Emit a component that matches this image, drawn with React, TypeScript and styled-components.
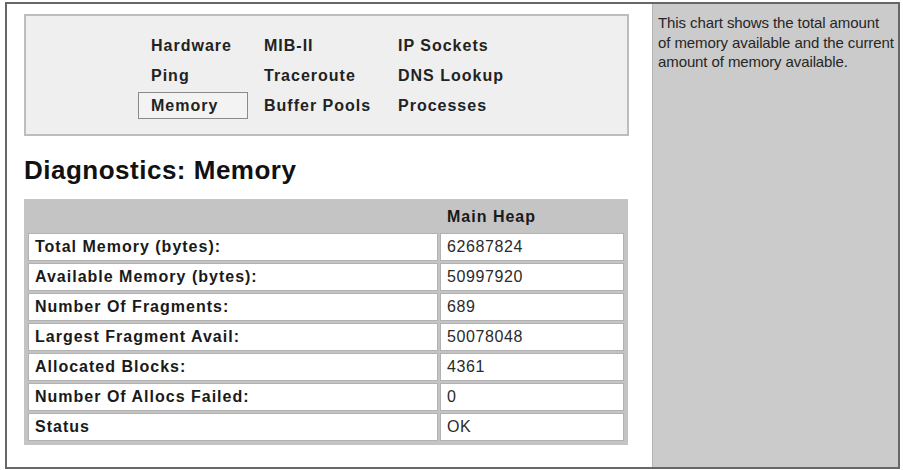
import styled, { createGlobalStyle } from 'styled-components';

const GlobalStyle = createGlobalStyle`
  html, body {
    margin: 0;
    padding: 0;
    background: #ffffff;
  }
  body {
    font-family: 'Liberation Sans', Arial, sans-serif;
    color: #1a1a1a;
  }
`;

const navItems = [
  ['Hardware', 'MIB-II', 'IP Sockets'],
  ['Ping', 'Traceroute', 'DNS Lookup'],
  ['Memory', 'Buffer Pools', 'Processes'],
];

const memoryRows = [
  ['Total Memory (bytes):', '62687824'],
  ['Available Memory (bytes):', '50997920'],
  ['Number Of Fragments:', '689'],
  ['Largest Fragment Avail:', '50078048'],
  ['Allocated Blocks:', '4361'],
  ['Number Of Allocs Failed:', '0'],
  ['Status', 'OK'],
];

const Frame = styled.div`
  display: flex;
  height: 463px;
  margin: 2px 3px 0 5px;
  border: 2px solid #676767;
  background: #ffffff;
`;

const Main = styled.main`
  width: 645px;
  box-sizing: border-box;
  padding: 10px 23px 0 17px;
`;

const NavBox = styled.nav`
  border: 2px solid #bdbdbd;
  background: #efefef;
  padding: 16px 0 15px;
`;

const NavGrid = styled.div`
  display: grid;
  grid-template-columns: 110px 131px 130px;
  grid-auto-rows: 27px;
  gap: 3px;
  justify-content: center;
`;

const NavItem = styled.a<{ $active?: boolean }>`
  display: flex;
  align-items: center;
  box-sizing: border-box;
  padding-left: 12px;
  border: 1px solid ${p => (p.$active ? '#8a8a8a' : 'transparent')};
  background: ${p => (p.$active ? '#f3f3f3' : 'transparent')};
  font-size: 16px;
  font-weight: 700;
  letter-spacing: 1px;
  color: #222;
  text-decoration: none;
  white-space: nowrap;
`;

const Heading = styled.h1`
  margin: 19px 0 14px;
  font-size: 26px;
  line-height: 30px;
  font-weight: 700;
  letter-spacing: 0.5px;
  color: #111;
`;

const Table = styled.table`
  width: 604px;
  border: 2px solid #c4c4c4;
  border-spacing: 2px;
  background: #c4c4c4;
  table-layout: fixed;
`;

const LabelCol = styled.col`
  width: 410px;
`;

const HeadCell = styled.th`
  height: 28px;
  padding: 0 7px;
  text-align: left;
  font-size: 16px;
  font-weight: 700;
  letter-spacing: 1px;
  color: #1a1a1a;
`;

const LabelCell = styled.td`
  height: 28px;
  box-sizing: border-box;
  padding: 0 6px;
  background: #ffffff;
  border: 1px solid #b2b2b2;
  font-size: 16px;
  font-weight: 700;
  letter-spacing: 1px;
  color: #1a1a1a;
  white-space: nowrap;
`;

const ValueCell = styled.td`
  height: 28px;
  box-sizing: border-box;
  padding: 0 6px;
  background: #ffffff;
  border: 1px solid #b2b2b2;
  font-size: 16px;
  letter-spacing: 0.6px;
  color: #2a2a2a;
`;

const Sidebar = styled.aside`
  flex: 1;
  box-sizing: border-box;
  padding: 9px 0 0 5px;
  background: #cbcbcb;
  border-left: 1px solid #b4b4b4;
  font-size: 15px;
  line-height: 19.5px;
  letter-spacing: -0.1px;
  color: #262626;
  white-space: nowrap;
`;

export default function App() {
  return (
    <>
      <GlobalStyle />
      <Frame>
        <Main>
          <NavBox>
            <NavGrid>
              {navItems.flat().map(item => (
                <NavItem key={item} $active={item === 'Memory'}>
                  {item}
                </NavItem>
              ))}
            </NavGrid>
          </NavBox>
          <Heading>Diagnostics: Memory</Heading>
          <Table>
            <colgroup>
              <LabelCol />
              <col />
            </colgroup>
            <thead>
              <tr>
                <HeadCell />
                <HeadCell>Main Heap</HeadCell>
              </tr>
            </thead>
            <tbody>
              {memoryRows.map(([label, value]) => (
                <tr key={label}>
                  <LabelCell>{label}</LabelCell>
                  <ValueCell>{value}</ValueCell>
                </tr>
              ))}
            </tbody>
          </Table>
        </Main>
        <Sidebar>
          This chart shows the total amount
          <br />
          of memory available and the current
          <br />
          amount of memory available.
        </Sidebar>
      </Frame>
    </>
  );
}
